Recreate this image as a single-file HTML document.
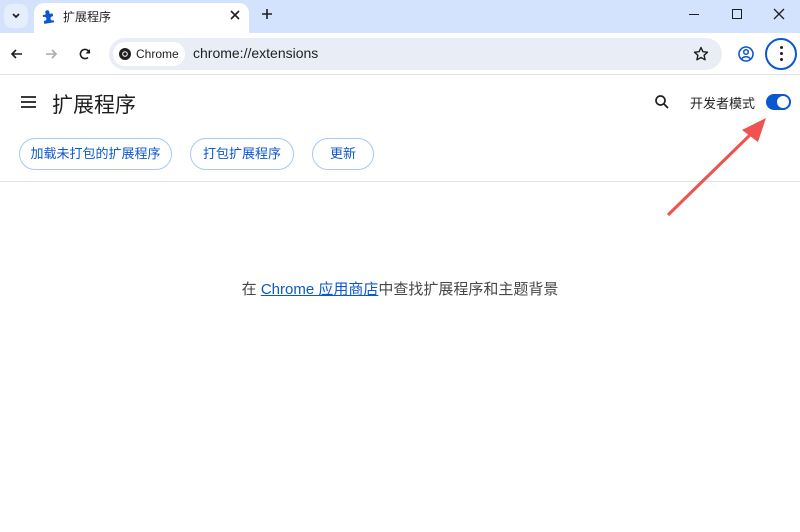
<!DOCTYPE html>
<html><head><meta charset="utf-8"><style>
*{margin:0;padding:0;box-sizing:border-box}
body{width:800px;height:532px;background:#fff;font-family:"Liberation Sans","Noto Sans CJK SC",sans-serif;position:relative;overflow:hidden}
.abs{position:absolute}
.top{left:0;top:0;width:800px;height:33px;background:#d3e3fd}
.tab{left:34px;top:3px;width:215px;height:32px;background:#fff;border-radius:10px 10px 0 0}
.tb{left:0;top:33px;width:800px;height:42px;background:#fff;border-bottom:1px solid #e3e3e3}
.omni{left:109px;top:38px;width:613px;height:32px;background:#e9eef6;border-radius:16px}
.chip{left:113px;top:42px;width:72px;height:24px;background:#fff;border-radius:12px;font-size:12px;color:#1f1f1f}
.btn{top:138px;height:32px;border:1px solid #a8c7fa;border-radius:16px;color:#0b57d0;font-size:13px;text-align:center;line-height:30px}
</style></head><body>
<div class="abs top"></div>
<div class="abs" style="left:4px;top:4px;width:24px;height:24px;background:#e6eefc;border-radius:8px"></div>
<svg class="abs" style="left:10px;top:10px" width="12" height="12"><path d="M3 4l3 3 3-3" stroke="#1f1f1f" stroke-width="1.8" fill="none"/></svg>
<div class="abs tab"></div>
<svg class="abs" style="left:41px;top:8px" width="16" height="16" viewBox="0 0 16 16"><path d="M2 6h3V4a2 2 0 014 0v2h3v3h-1a2 2 0 000 4h1v2H2v-3h1a2 2 0 000-4H2z" fill="#0b57d0" transform="rotate(-10 8 8)"/></svg>
<div class="abs" style="left:63px;top:8px;font-size:12px;color:#1f1f1f">扩展程序</div>
<svg class="abs" style="left:229px;top:9px" width="12" height="12"><path d="M2 2l8 8M10 2l-8 8" stroke="#1f1f1f" stroke-width="1.6"/></svg>
<svg class="abs" style="left:261px;top:8px" width="12" height="12"><path d="M6 1v10M1 6h10" stroke="#1f1f1f" stroke-width="1.6"/></svg>
<div class="abs" style="left:689px;top:14px;width:10px;height:1px;background:#1f1f1f"></div>
<div class="abs" style="left:732px;top:9px;width:10px;height:10px;border:1.3px solid #1f1f1f"></div>
<svg class="abs" style="left:773px;top:8px" width="12" height="12"><path d="M1 1l10 10M11 1L1 11" stroke="#1f1f1f" stroke-width="1.3"/></svg>
<div class="abs tb"></div>
<svg class="abs" style="left:9px;top:46px" width="16" height="16"><path d="M13 8H3M7 4L3 8l4 4" stroke="#1f1f1f" stroke-width="1.6" fill="none"/></svg>
<svg class="abs" style="left:43px;top:46px" width="16" height="16"><path d="M3 8h10M9 4l4 4-4 4" stroke="#aaa" stroke-width="1.6" fill="none"/></svg>
<svg class="abs" style="left:77px;top:46px" width="16" height="16"><path d="M12.5 7A4.6 4.6 0 1011 11.5" stroke="#1f1f1f" stroke-width="1.6" fill="none"/><path d="M13 3v4.5H8.5" fill="#1f1f1f"/></svg>
<div class="abs omni"></div>
<div class="abs chip"><svg style="position:absolute;left:5px;top:5px" width="14" height="14"><circle cx="7" cy="7" r="6" fill="#1f1f1f"/><circle cx="7" cy="7" r="2.8" fill="#fff"/><circle cx="7" cy="7" r="1.8" fill="#1f1f1f"/></svg><span style="position:absolute;left:23px;top:5px">Chrome</span></div>
<div class="abs" style="left:193px;top:45px;font-size:14px;color:#1f1f1f">chrome://extensions</div>
<svg class="abs" style="left:693px;top:46px" width="16" height="16" viewBox="0 0 16 16"><path d="M8 1.5l1.9 4.2 4.6.5-3.4 3.1 1 4.5L8 11.5l-4.1 2.3 1-4.5L1.5 6.2l4.6-.5z" stroke="#1f1f1f" stroke-width="1.4" fill="none" stroke-linejoin="round"/></svg>
<svg class="abs" style="left:737px;top:45px" width="18" height="18"><circle cx="9" cy="9" r="7" stroke="#0b57d0" stroke-width="1.6" fill="none"/><circle cx="9" cy="7" r="2.3" stroke="#0b57d0" stroke-width="1.5" fill="none"/><path d="M4.5 14c2-3 7-3 9 0" stroke="#0b57d0" stroke-width="1.5" fill="none"/></svg>
<div class="abs" style="left:765px;top:38px;width:32px;height:32px;border:2px solid #0b57d0;border-radius:50%"></div>
<div class="abs" style="left:780px;top:46px;width:3px;height:3px;background:#1f1f1f;border-radius:50%;box-shadow:0 6px 0 #1f1f1f,0 12px 0 #1f1f1f"></div>
<svg class="abs" style="left:20px;top:95px" width="18" height="14"><path d="M1 2h15M1 7h15M1 12h15" stroke="#1f1f1f" stroke-width="1.8"/></svg>
<div class="abs" style="left:52px;top:89px;font-size:21px;color:#1f1f1f">扩展程序</div>
<svg class="abs" style="left:654px;top:94px" width="16" height="16"><circle cx="6.5" cy="6.5" r="4.5" stroke="#1f1f1f" stroke-width="1.7" fill="none"/><path d="M10 10l4 4" stroke="#1f1f1f" stroke-width="1.8"/></svg>
<div class="abs" style="left:690px;top:93px;font-size:13px;color:#1f1f1f">开发者模式</div>
<div class="abs" style="left:766px;top:94px;width:25px;height:16px;background:#0b57d0;border-radius:8px"></div>
<div class="abs" style="left:777px;top:96px;width:12px;height:12px;background:#fff;border-radius:50%"></div>
<div class="abs btn" style="left:19px;width:153px">加载未打包的扩展程序</div>
<div class="abs btn" style="left:190px;width:104px">打包扩展程序</div>
<div class="abs btn" style="left:312px;width:62px">更新</div>
<div class="abs" style="left:0;top:181px;width:800px;height:1px;background:#e3e3e3"></div>
<div class="abs" style="left:0;top:278px;width:800px;text-align:center;font-size:15px;color:#474747">在 <span style="color:#0b57d0;text-decoration:underline">Chrome 应用商店</span>中查找扩展程序和主题背景</div>
<svg class="abs" style="left:0;top:0" width="800" height="532"><path d="M668 215L752 133" stroke="#f0524f" stroke-width="3"/><path d="M766 118L742 130L758 142Z" fill="#f0524f"/></svg>
</body></html>
